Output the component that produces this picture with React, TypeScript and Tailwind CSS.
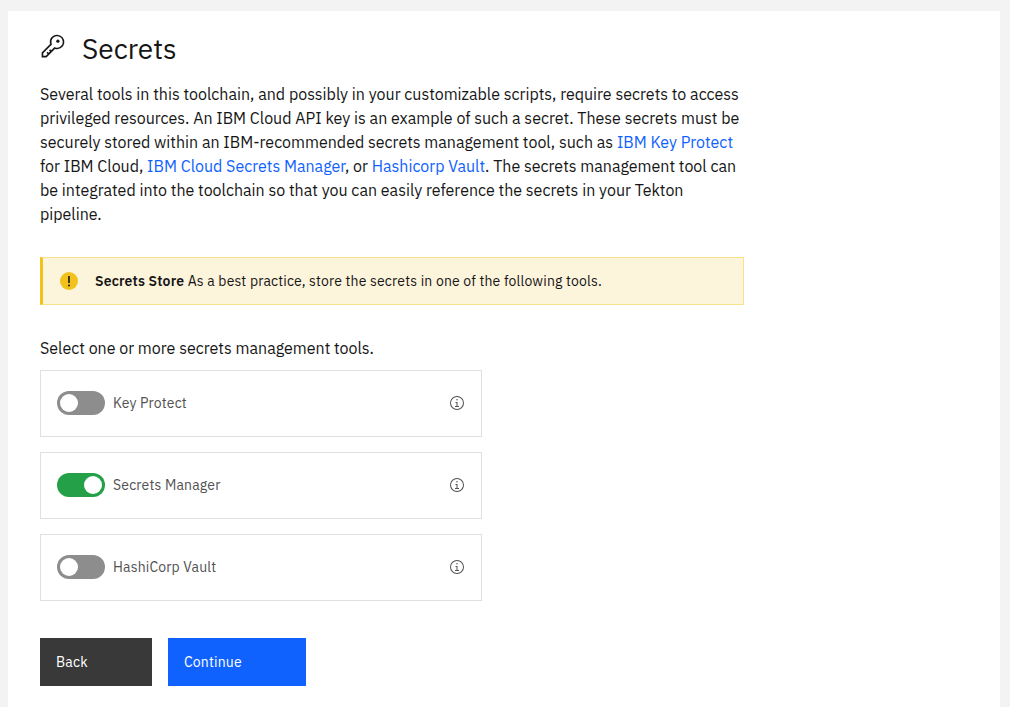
import { useState } from "react";

function KeyIcon() {
  return (
    <svg className="size-[26px] shrink-0" viewBox="0 0 32 32" fill="currentColor" aria-hidden="true">
      <path d="M21,2a8.9977,8.9977,0,0,0-8.6119,11.6118L2,24v6H8L18.3881,19.6118A9,9,0,1,0,21,2Zm0,16a7.0125,7.0125,0,0,1-2.0322-.3022L17.821,17.35l-.8472.8472-3.1811,3.1812L12.4141,20,11,21.4141l1.3787,1.3786-1.5859,1.586L9.4141,23,8,24.4141l1.3787,1.3786L7.1716,28H4V24.8284l9.8023-9.8023.8472-.8474-.3473-1.1467A7,7,0,1,1,21,18Z" />
      <circle cx="22" cy="10" r="2" />
    </svg>
  );
}

function WarningIcon() {
  return (
    <svg className="size-5 shrink-0" viewBox="0 0 20 20" aria-hidden="true">
      <circle cx="10" cy="10" r="9" fill="#f1c21b" />
      <path d="M9.2 5h1.6v7H9.2z" fill="#161616" />
      <circle cx="10" cy="14.5" r="1" fill="#161616" />
    </svg>
  );
}

function InfoIcon() {
  return (
    <svg className="size-4" viewBox="0 0 32 32" fill="currentColor" aria-hidden="true">
      <path d="M17 22V14H13v2h2v6H12v2h8V22zM16 8a1.5 1.5 0 1 0 1.5 1.5A1.5 1.5 0 0 0 16 8Z" />
      <path d="M16 30A14 14 0 1 1 30 16 14 14 0 0 1 16 30ZM16 4A12 12 0 1 0 28 16 12 12 0 0 0 16 4Z" />
    </svg>
  );
}

function Link({ children }: { children: string }) {
  return (
    <a href="#" className="text-[#0f62fe]">
      {children}
    </a>
  );
}

function ToolCard({ label, initial }: { label: string; initial: boolean }) {
  const [on, setOn] = useState(initial);
  return (
    <div className="flex h-[67px] w-[442px] items-center justify-between border border-[#e0e0e0] px-4 pb-px">
      <button type="button" role="switch" aria-checked={on} onClick={() => setOn(!on)} className="flex items-center gap-2">
        <span className={`flex h-6 w-12 items-center rounded-full px-[3px] ${on ? "justify-end bg-[#24a148]" : "justify-start bg-[#8d8d8d]"}`}>
          <span className="size-[18px] rounded-full bg-white" />
        </span>
        <span className="text-sm leading-[18px] tracking-[0.16px] text-[#525252]">{label}</span>
      </button>
      <button type="button" aria-label={`About ${label}`} className="text-[#525252]">
        <InfoIcon />
      </button>
    </div>
  );
}

export default function App() {
  return (
    <div className="h-[707px] overflow-hidden bg-[#f3f3f3] pr-[10px] pl-2 pt-[11px] font-['IBM_Plex_Sans','Roboto',sans-serif] text-[#161616]">
      <main className="h-full bg-white px-8 pt-[22px]">
        <header className="flex h-[38px] items-start gap-4">
          <KeyIcon />
          <h1 className="text-[28px] leading-8">Secrets</h1>
        </header>

        <p className="mt-[11px] text-base leading-6 whitespace-nowrap">
          Several tools in this toolchain, and possibly in your customizable scripts, require secrets to access
          <br />
          privileged resources. An IBM Cloud API key is an example of such a secret. These secrets must be
          <br />
          securely stored within an IBM-recommended secrets management tool, such as <Link>IBM Key Protect</Link>
          <br />
          for IBM Cloud, <Link>IBM Cloud Secrets Manager</Link>, or <Link>Hashicorp Vault</Link>. The secrets management tool can
          <br />
          be integrated into the toolchain so that you can easily reference the secrets in your Tekton
          <br />
          pipeline.
        </p>

        <div className="mt-[31px] flex h-12 w-[704px] items-center border border-l-[3px] border-[#f8e38c] border-l-[#f1c21b] bg-[#fdf4dc] pl-4">
          <WarningIcon />
          <p className="ml-4 text-sm leading-[18px] tracking-[0.16px] whitespace-nowrap">
            <strong className="font-semibold">Secrets Store</strong> As a best practice, store the secrets in one of the following tools.
          </p>
        </div>

        <p className="mt-[31px] text-base leading-6">Select one or more secrets management tools.</p>
        <div className="mt-[10px] flex flex-col gap-[15px]">
          <ToolCard label="Key Protect" initial={false} />
          <ToolCard label="Secrets Manager" initial={true} />
          <ToolCard label="HashiCorp Vault" initial={false} />
        </div>

        <div className="mt-[37px] flex gap-4 text-sm leading-[18px] tracking-[0.16px] text-white">
          <button type="button" className="h-12 w-28 bg-[#393939] pl-4 text-left">Back</button>
          <button type="button" className="h-12 w-[138px] bg-[#0f62fe] pl-4 text-left">Continue</button>
        </div>
      </main>
    </div>
  );
}
